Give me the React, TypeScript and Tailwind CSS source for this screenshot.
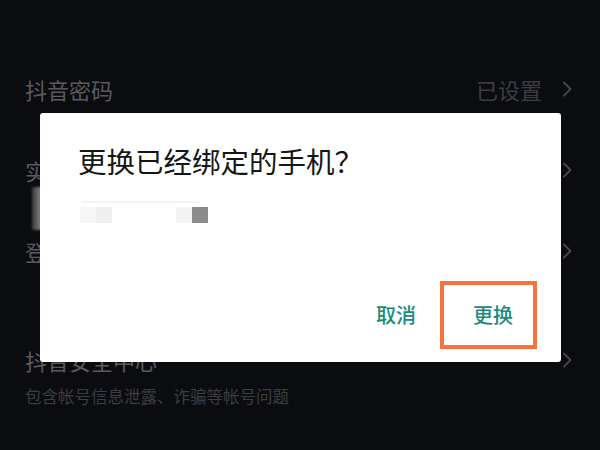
import React from "react";

const Chevron = ({ className = "" }: { className?: string }) => (
  <svg width="10" height="16" viewBox="0 0 10 16" className={className} fill="none">
    <path d="M2 1.5 L8.5 8 L2 14.5" stroke="currentColor" strokeWidth="1.8" strokeLinecap="round" strokeLinejoin="round" />
  </svg>
);

export default function App() {
  const font = { fontFamily: '"Noto Sans CJK SC", "Noto Sans", sans-serif' };
  return (
    <div className="relative w-[600px] h-[450px] overflow-hidden bg-[#0b0c10]" style={font}>
      {/* settings list */}
      <div className="flex flex-col pt-[48px] pl-[25px] pr-[28px]">
        <div className="h-[81px] flex items-center justify-between">
          <span className="text-[22px] leading-[22px] text-[#5a5a5f]">抖音密码</span>
          <div className="flex items-center gap-[20px] text-[#3c3c41]">
            <span className="text-[22px] leading-[22px]">已设置</span>
            <Chevron className="text-[#48484d]" />
          </div>
        </div>
        <div className="h-[81px] flex items-center justify-between">
          <span className="text-[22px] leading-[22px] text-[#5a5a5f]">实名认证</span>
          <Chevron className="text-[#48484d]" />
        </div>
        <div className="h-[81px] flex items-center justify-between">
          <span className="text-[22px] leading-[22px] text-[#5a5a5f]">登录设备管理</span>
          <Chevron className="text-[#48484d]" />
        </div>
        <div className="pt-[58px] flex items-center justify-between">
          <span className="text-[22px] leading-[22px] text-[#5a5a5f]">抖音安全中心</span>
          <Chevron className="text-[#48484d]" />
        </div>
        <div className="pt-[16px] text-[16.5px] leading-[18px] text-[#3c3c41]">包含帐号信息泄露、诈骗等帐号问题</div>
      </div>

      {/* blurred underlying bit */}
      <div className="absolute left-[32px] top-[187px] w-[10px] h-[43px] bg-gradient-to-r from-[#3a3a3c] to-[#8a8a8c] blur-[1px]" />

      {/* dialog */}
      <div className="absolute left-[40px] top-[113px] w-[521px] h-[249px] bg-white rounded-[3px] flex flex-col">
        <div className="pt-[34px] pl-[38px] text-[28.5px] leading-[28px] text-[#161616]">更换已经绑定的手机？</div>
        <div className="mt-[26px] ml-[40px] flex flex-col">
          <div className="h-[2px] w-[118px] ml-[2px] bg-[#f4f4f4]" />
          <div className="mt-[4px] flex h-[16px]">
            <div className="w-[16px] bg-[#f6f6f6]" />
            <div className="w-[16px] bg-[#efefef]" />
            <div className="w-[64px]" />
            <div className="w-[16px] bg-[#f4f4f4]" />
            <div className="w-[16px] bg-[#8c8c8c]" />
          </div>
        </div>
        <div className="flex-1" />
        <div className="flex justify-end gap-[57px] pr-[48px] pb-[37px] text-[20px] leading-[20px] text-[#198c7b] font-medium">
          <span>取消</span>
          <span>更换</span>
        </div>
        <div className="absolute left-[400px] top-[168px] w-[97px] h-[68px] border-[4px] border-[#f4733f]" />
      </div>
    </div>
  );
}
